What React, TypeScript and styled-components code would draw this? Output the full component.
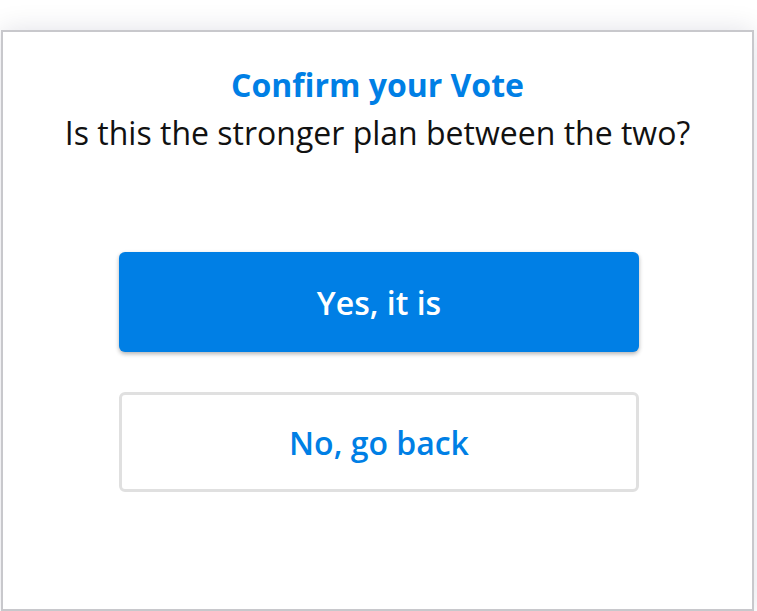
import React from "react";
import styled, { createGlobalStyle } from "styled-components";

const Global = createGlobalStyle`
  html, body { margin: 0; padding: 0; background: #ffffff; }
  body { font-family: "Open Sans", "Noto Sans", sans-serif; }
`;

const Page = styled.div`
  padding: 30px 3px 0 1px;
  overflow: hidden;
  height: 611px;
  box-sizing: border-box;
`;

const Dialog = styled.div`
  box-sizing: border-box;
  height: 581px;
  border: 2px solid #c8c8cc;
  background: #ffffff;
  box-shadow: 0 0 26px rgba(20, 20, 60, 0.12);
  display: flex;
  flex-direction: column;
  align-items: center;
  padding-top: 34px;
`;

const Title = styled.h1`
  margin: 0;
  font-size: 32px;
  font-weight: 700;
  line-height: 38px;
  color: #007fe5;
`;

const Subtitle = styled.p`
  margin: 10px 0 0;
  font-size: 32px;
  font-weight: 400;
  line-height: 38px;
  color: #111111;
`;

const Actions = styled.div`
  margin-top: 100px;
  width: 520px;
  display: flex;
  flex-direction: column;
  gap: 40px;
  margin-left: 3px;
`;

const Button = styled.button<{ $primary?: boolean }>`
  box-sizing: border-box;
  height: 100px;
  width: 100%;
  border-radius: 6px;
  font-family: inherit;
  font-size: 32px;
  font-weight: 600;
  cursor: pointer;
  background: ${(p) => (p.$primary ? "#007fe5" : "#ffffff")};
  color: ${(p) => (p.$primary ? "#ffffff" : "#007fe5")};
  border: ${(p) => (p.$primary ? "none" : "3px solid #e0e0e0")};
  box-shadow: ${(p) => (p.$primary ? "0 2px 4px rgba(0,0,0,0.3)" : "none")};
`;

export default function App() {
  return (
    <>
      <Global />
      <Page>
        <Dialog>
          <Title>Confirm your Vote</Title>
          <Subtitle>Is this the stronger plan between the two?</Subtitle>
          <Actions>
            <Button $primary>Yes, it is</Button>
            <Button>No, go back</Button>
          </Actions>
        </Dialog>
      </Page>
    </>
  );
}
